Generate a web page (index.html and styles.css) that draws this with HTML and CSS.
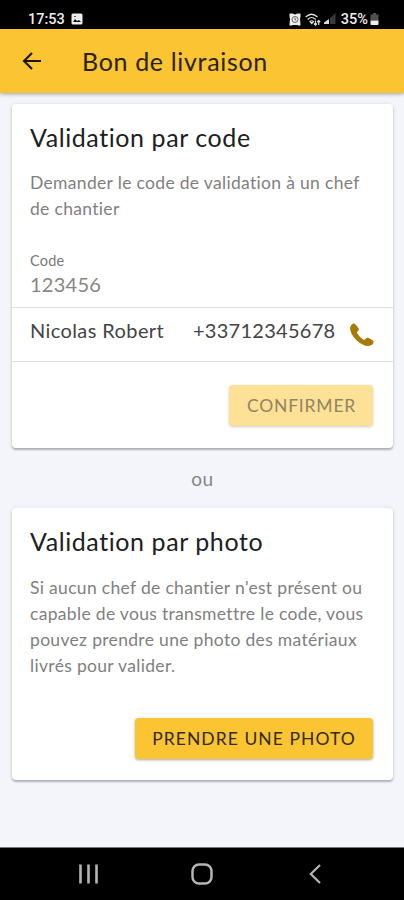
FILE: index.html
```html
<!DOCTYPE html>
<html lang="fr">
<head>
<meta charset="utf-8">
<title>Bon de livraison</title>
<link rel="stylesheet" href="styles.css">
</head>
<body>
<div class="screen">
  <div class="status">
    <span class="time">17:53</span>
    <svg class="picture" width="12" height="12" viewBox="0 0 12 12"><rect x=".5" y=".5" width="11" height="11" rx="1.500" fill="#eee"/><path d="M2 9l2-3 2 2 2-1 2 2z" fill="#111"/><path d="M3 3.500h2" stroke="#555"/></svg>
    <div class="indicators">
      <svg width="12" height="13" viewBox="0 0 12 13"><path d="M.5.500h3L6 1.500 8.500.500h3v3L11 6l.5 5v1.500h-2L8 12H4l-1.500.500h-2V11L1 6 .5 3.500z" fill="#eee"/><circle cx="6" cy="6.500" r="3" fill="none" stroke="#444" stroke-width=".8"/><path d="M6 4.800v1.900l1.200.6" fill="none" stroke="#333" stroke-width=".8"/></svg>
      <svg class="wifi" width="16" height="13" viewBox="0 0 16 13"><g fill="none" stroke="#ddd" stroke-width="1.200"><path d="M.7 4Q6.500-1.500 12.500 4M2.700 6.500Q6.500 2.500 10.700 6.500M5 8.500q1.700-1.500 3.500 0L6.700 10.500z"/><path d="M10.500 7.500v4.500M8.800 10.500l1.700 1.700 1.500-1.700M13.700 12V7.500M12.200 9l1.500-1.500L15.200 9"/></g></svg>
      <svg class="signal" width="12" height="12" viewBox="0 0 12 12"><path d="M0 11V9.500L5 6v5z" fill="#ddd"/><path d="M6 11V5.500L11.500 0v11z" fill="#3b3b3b"/></svg>
      <span class="percent">35%</span>
      <svg class="battery" width="9" height="12" viewBox="0 0 9 12"><path d="M3 0h3v1.500h2.500v6h-8v-6H3z" fill="#505050"/><path d="M.5 7.500h8V11q0 1-1 1h-6q-1 0-1-1z" fill="#eee"/></svg>
    </div>
  </div>
  <header class="toolbar">
    <svg class="back" width="20" height="20" viewBox="0 0 20 20"><path d="M10 2L2 10l8 8M2 10h17" fill="none" stroke="#17150c" stroke-width="2.100"/></svg>
    <h1>Bon de livraison</h1>
  </header>
  <main>
    <section class="card code-card">
      <h2 class="code-title">Validation par code</h2>
      <p><span class="a1">Demander le code de validation à un chef</span><span class="a2">de chantier</span></p>
      <div class="field">
        <label>Code</label>
        <div class="value">123456</div>
      </div>
      <div class="contact">
        <span class="name">Nicolas Robert</span>
        <span class="phone">+33712345678</span>
        <svg class="call" width="25" height="24" viewBox="0 0 25 24"><path d="M3.700.800Q1.400 2 1 5q.2 6 6.500 12.200Q13.700 23 19.500 23q4-.4 5-3.200.5-1.600-1-2.500l-3.800-2.200q-1.500-.8-2.600.4l-1.200 1q-.8.600-1.600 0-4-2.500-6.100-6.200-.5-.8.100-1.600l1.200-1.300q.8-1 .1-2.200L6.300 1.300Q5.200 0 3.700.800z" fill="#a97a05"/></svg>
      </div>
      <div class="actions"><button class="confirm" disabled><span>CONFIRMER</span></button></div>
    </section>
    <div class="or">ou</div>
    <section class="card photo-card">
      <h2 class="photo-title">Validation par photo</h2>
      <p><span class="b1">Si aucun chef de chantier n'est présent ou</span><span class="b2">capable de vous transmettre le code, vous</span><span class="b3">pouvez prendre une photo des matériaux</span><span class="b4">livrés pour valider.</span></p>
      <div class="actions"><button class="take"><span>PRENDRE UNE PHOTO</span></button></div>
    </section>
  </main>
  <nav>
    <svg width="20" height="20" viewBox="0 0 20 20"><path d="M1.500.500v19M9.500.500v19M17.500.500v19" stroke="#b5b5b5" stroke-width="2.600"/></svg>
    <svg class="home" width="22" height="22" viewBox="0 0 22 22"><rect x="1.500" y="1.500" width="19" height="19" rx="6.500" fill="none" stroke="#b5b5b5" stroke-width="2.500"/></svg>
    <svg width="12" height="20" viewBox="0 0 12 20"><path d="M11 1L1.800 10l9.200 9" fill="none" stroke="#b5b5b5" stroke-width="2.200"/></svg>
  </nav>
</div>
</body>
</html>
```
FILE: styles.css
```css
* { box-sizing: border-box; }
body { margin: 0; font-family: Lato, sans-serif; font-variant-ligatures: none; }
h1, h2, p { margin: 0; font-weight: 400; }
svg { display: block; flex: none; }
.screen { width: 404px; height: 900px; display: flex; flex-direction: column; background: #f3f5fa; overflow: hidden; white-space: nowrap; }
.status { height: 29px; background: #000; color: #eee; display: flex; align-items: center; padding: 9px 25px 0 28px; font: 500 14.500px/20px Roboto, sans-serif; }
.time { width: 43px; padding-top: 1px; }
.percent { padding-top: 1px; }
.indicators { margin-left: auto; display: flex; align-items: center; }
.wifi { margin-left: 4px; }
.signal { margin: 0 5px 0 3px; }
.battery { margin-left: 2px; }
.toolbar { height: 64px; flex: none; background: #fac432; display: flex; align-items: center; padding: 0 0 0 22px; box-shadow: 0 1px 4px rgba(0,0,0,.35); }
h1 { margin-left: 40px; font-size: 25px; line-height: 32px; color: #29220f; letter-spacing: .67px; }
main { flex: 1; padding: 11px 11px 0 12px; }
.card { background: #fff; border-radius: 4px; box-shadow: 0 2px 2px rgba(0,0,0,.25), 0 0 4px rgba(0,0,0,.1); display: flex; flex-direction: column; }
.code-card { height: 344px; }
.photo-card { height: 272px; }
h2 { padding: 17px 18px 0; font-size: 25px; line-height: 32px; color: #202020; letter-spacing: .58px; }
.card p { padding: 17px 18px 0; font-size: 17.500px; line-height: 26px; color: #7f7f7f; letter-spacing: .32px; }
.photo-card p { position: relative; top: .5px; }
p span { display: block; }
.field { height: 60px; margin-top: 26px; padding: 3px 18px 0; color: #777; border-bottom: 1px solid #dedede; flex: none; }
label { display: block; font-size: 14.500px; line-height: 20px; letter-spacing: .2px; }
.value { font-size: 20px; line-height: 27px; color: #858585; letter-spacing: .25px; }
.contact { height: 54px; border-bottom: 1px solid #dedede; padding: 0 19px 6px 18px; display: flex; align-items: center; color: #444; font-size: 20px; flex: none; }
.name { width: 163px; letter-spacing: .4px; }
.phone { letter-spacing: .27px; }
.name, .phone { margin-top: -3px; }
.call { margin: 6px 0 0 auto; }
.actions { margin-top: auto; display: flex; justify-content: flex-end; padding: 0 20px 22px; }
button { height: 41px; border: 0; border-radius: 4px; background: #fac432; color: #332a12; padding: 0 0 0 1px; font: 400 17.500px/41px Lato, sans-serif; letter-spacing: 1.050px; box-shadow: 0 1px 3px rgba(0,0,0,.35); }
.confirm { width: 144px; letter-spacing: .8px; background: #fce196; color: #948364; box-shadow: 0 1px 3px rgba(0,0,0,.2); }
.take { width: 238px; padding: 0; }
.photo-card .actions { padding-bottom: 21px; }
.or { height: 60px; text-align: center; font-size: 19px; line-height: 62px; color: #858585; letter-spacing: .5px; }
nav { height: 53px; flex: none; border-top: 1px solid #777; background: #000; display: flex; align-items: center; padding: 0 83px 0 79px; justify-content: space-between; }
.home { margin: 0 2px 0 -2px; }
```
